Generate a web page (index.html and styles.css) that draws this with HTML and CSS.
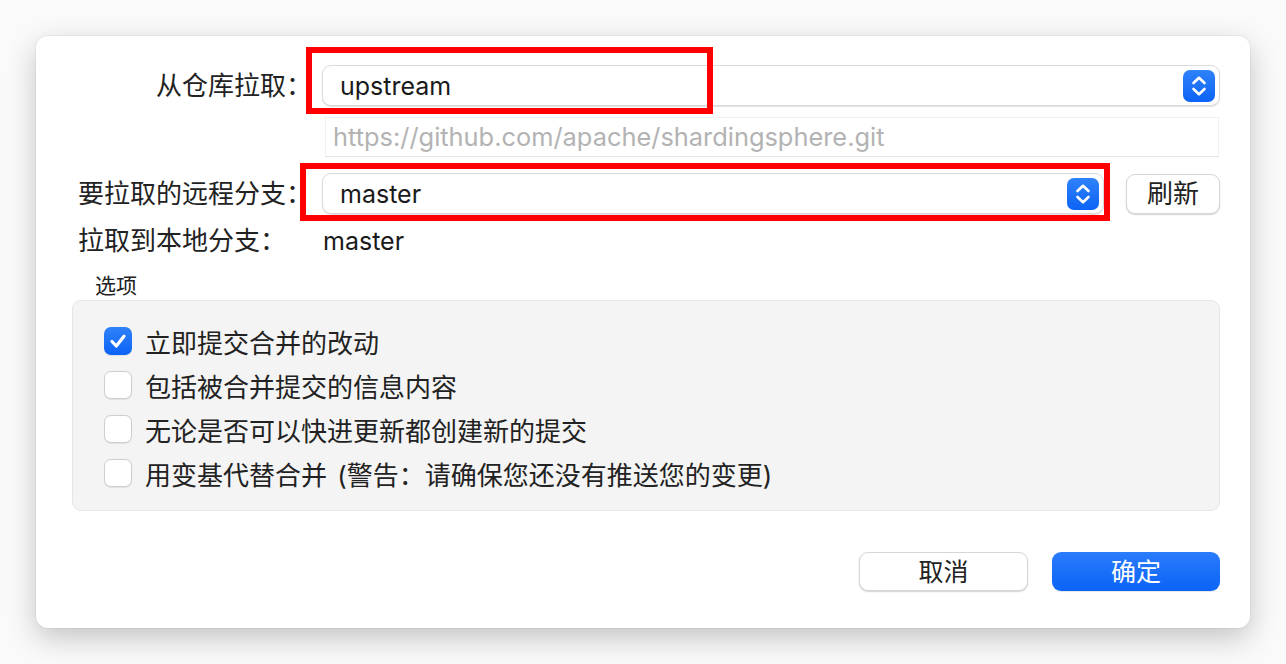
FILE: index.html
```html
<!DOCTYPE html>
<html lang="zh-CN">
<head>
<meta charset="utf-8">
<title>拉取</title>
<link rel="stylesheet" href="styles.css">
</head>
<body>
<div class="dialog">
  <div class="row row-repo">
    <div class="label">从仓库拉取：</div>
    <div class="select select-wide">
      <span class="select-text">upstream</span>
      <span class="stepper">
        <svg viewBox="0 0 32 32" width="32" height="32"><path d="M10.5 13 L16 7.8 L21.5 13 M10.5 19 L16 24.2 L21.5 19" fill="none" stroke="#fff" stroke-width="2.6" stroke-linecap="round" stroke-linejoin="round"/></svg>
      </span>
    </div>
  </div>
  <div class="url-row">
    <div class="url-field">https://github.com/apache/shardingsphere.git</div>
  </div>
  <div class="row row-branch">
    <div class="label">要拉取的远程分支：</div>
    <div class="select select-branch">
      <span class="select-text">master</span>
      <span class="stepper">
        <svg viewBox="0 0 32 32" width="32" height="32"><path d="M10.5 13 L16 7.8 L21.5 13 M10.5 19 L16 24.2 L21.5 19" fill="none" stroke="#fff" stroke-width="2.6" stroke-linecap="round" stroke-linejoin="round"/></svg>
      </span>
    </div>
    <button class="btn btn-refresh">刷新</button>
  </div>
  <div class="row row-local">
    <div class="label label-left">拉取到本地分支：</div>
    <div class="local-value">master</div>
  </div>
  <div class="section-title">选项</div>
  <div class="options">
    <label class="option">
      <span class="checkbox checked">
        <svg viewBox="0 0 28 28" width="28" height="28"><path d="M8 14.5 L12.3 19 L20 9.2" fill="none" stroke="#fff" stroke-width="3.2" stroke-linecap="round" stroke-linejoin="round"/></svg>
      </span>
      <span class="option-text">立即提交合并的改动</span>
    </label>
    <label class="option">
      <span class="checkbox"></span>
      <span class="option-text">包括被合并提交的信息内容</span>
    </label>
    <label class="option">
      <span class="checkbox"></span>
      <span class="option-text">无论是否可以快进更新都创建新的提交</span>
    </label>
    <label class="option">
      <span class="checkbox"></span>
      <span class="option-text">用变基代替合并 (警告：请确保您还没有推送您的变更)</span>
    </label>
  </div>
  <div class="footer">
    <button class="btn btn-cancel">取消</button>
    <button class="btn btn-primary">确定</button>
  </div>
</div>
<div class="annot annot-repo"></div>
<div class="annot annot-branch"></div>
</body>
</html>
```

FILE: styles.css
```css
* { box-sizing: border-box; }

body {
  margin: 0;
  width: 1286px;
  height: 664px;
  background: #fafafa;
  font-family: "Inter", "Noto Sans CJK SC", sans-serif;
  color: #222222;
  position: relative;
  overflow: hidden;
}

.dialog {
  margin: 36px 0 0 36px;
  width: 1214px;
  height: 592px;
  background: #ffffff;
  border-radius: 12px;
  box-shadow: 0 10px 30px rgba(0, 0, 0, 0.22), 0 0 0 1px rgba(0, 0, 0, 0.04);
  padding: 29px 30px 0 42px;
}

.row {
  display: flex;
  align-items: center;
}

.label {
  width: 234px;
  flex: none;
  text-align: right;
  font-size: 26px;
  line-height: 32px;
  white-space: nowrap;
  margin-right: 10px;
  color: #222222;
}

.label-left { text-align: left; }

.select {
  height: 41px;
  background: #fff;
  border: 1px solid #dadada;
  border-radius: 9px;
  box-shadow: 0 1px 1px rgba(0, 0, 0, 0.12);
  display: flex;
  align-items: center;
  justify-content: space-between;
  padding: 0 4px 0 17px;
}

.select-wide { flex: 1; }
.select-branch { flex: 1; }

.select-text {
  font-size: 25px;
  color: #1a1a1a;
}

.stepper {
  width: 32px;
  height: 32px;
  border-radius: 7px;
  background: linear-gradient(#2f82fa, #0c63f5);
  display: flex;
}

.url-row {
  margin-top: 11px;
  padding-left: 247px;
  padding-right: 1px;
}

.url-field {
  height: 40px;
  border: 1px solid #f0f0f0;
  border-bottom-color: #e4e4e4;
  background: #fff;
  padding-left: 7px;
  font-size: 25.4px;
  line-height: 38px;
  color: #b3b3b3;
  white-space: nowrap;
}

.row-branch { margin-top: 16px; }

.btn {
  font-family: "Noto Sans CJK SC", "Inter", sans-serif;
  font-size: 25px;
  height: 40px;
  border-radius: 9px;
  border: 1px solid #d6d6d6;
  background: #fff;
  color: #222222;
  box-shadow: 0 1px 1.5px rgba(0, 0, 0, 0.18);
  padding: 0 0 3px 0;
  line-height: 34px;
}

.btn-refresh {
  width: 94px;
  margin-left: 22px;
  font-size: 26px;
}

.row-local {
  margin-top: 13px;
  height: 28px;
}

.local-value {
  font-size: 25px;
  color: #1a1a1a;
  padding-left: 1px;
}

.section-title {
  margin-top: 17px;
  padding-left: 17px;
  font-size: 21px;
  line-height: 28px;
  color: #222222;
}

.options {
  margin-left: -6px;
  height: 211px;
  background: #f4f4f4;
  border: 1px solid #e6e6e6;
  border-radius: 9px;
  padding: 18px 0 0 31px;
}

.option {
  display: flex;
  align-items: center;
  height: 44px;
}

.checkbox {
  width: 28px;
  height: 28px;
  flex: none;
  border-radius: 7px;
  background: #fff;
  border: 1px solid #cfcfcf;
  box-shadow: 0 0.5px 1px rgba(0, 0, 0, 0.08);
  display: flex;
  margin-right: 13px;
}

.checkbox.checked {
  border: none;
  background: linear-gradient(#2f82fa, #0c63f5);
}

.option-text {
  font-size: 26px;
  color: #222222;
  white-space: nowrap;
  word-spacing: 3px;
}

.footer {
  margin-top: 41px;
  display: flex;
  justify-content: flex-end;
  gap: 24px;
}

.btn-cancel { width: 169px; height: 39px; }

.btn-primary {
  width: 168px;
  height: 39px;
  border: none;
  color: #fff;
  background: linear-gradient(#2a7cfb, #0b63f6);
  box-shadow: 0 1px 1px rgba(0, 0, 0, 0.1);
}

.annot {
  position: absolute;
  border: 6px solid #ff0000;
  pointer-events: none;
}

.annot-repo {
  left: 306px;
  top: 47px;
  width: 407px;
  height: 67px;
}

.annot-branch {
  left: 300px;
  top: 163px;
  width: 810px;
  height: 58px;
}
```
